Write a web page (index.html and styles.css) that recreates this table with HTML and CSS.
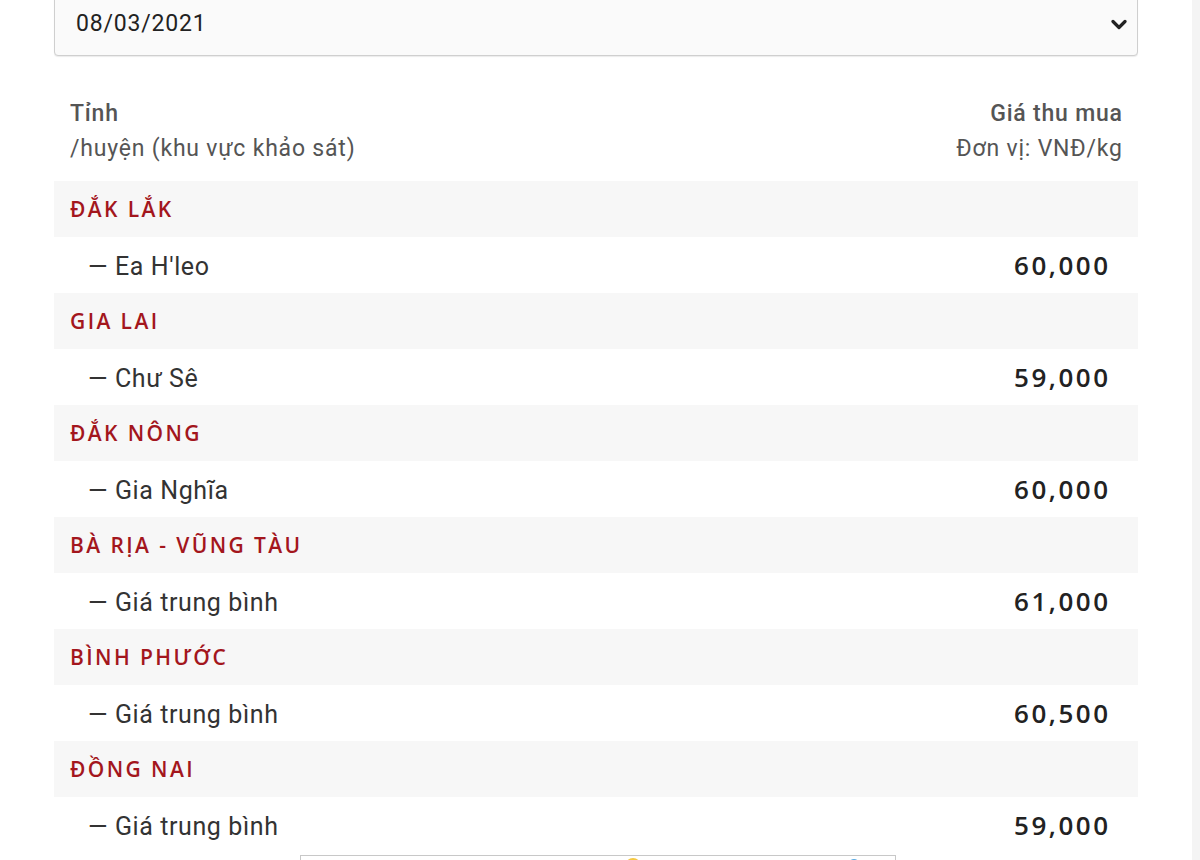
FILE: index.html
```html
<!DOCTYPE html>
<html lang="vi">
<head>
<meta charset="utf-8">
<title>Giá thu mua</title>
<link rel="stylesheet" href="styles.css">
</head>
<body>
<div class="page">
  <main class="content">
    <div class="select">
      <span class="select-value">08/03/2021</span>
      <svg class="chevron" width="16" height="11" viewBox="0 0 16 11"><path d="M2 2.5 L8 8.5 L14 2.5" fill="none" stroke="#222" stroke-width="3.2" stroke-linecap="round" stroke-linejoin="round"/></svg>
    </div>
    <div class="table-head">
      <div class="head-left">
        <div class="head-title">Tỉnh</div>
        <div class="head-sub">/huyện (khu vực khảo sát)</div>
      </div>
      <div class="head-right">
        <div class="head-title">Giá thu mua</div>
        <div class="head-sub">Đơn vị: VNĐ/kg</div>
      </div>
    </div>
    <div class="rows">
      <div class="prov">ĐẮK LẮK</div>
      <div class="item"><span class="name">— Ea H'leo</span><span class="price">60,000</span></div>
      <div class="prov">GIA LAI</div>
      <div class="item"><span class="name">— Chư Sê</span><span class="price">59,000</span></div>
      <div class="prov">ĐẮK NÔNG</div>
      <div class="item"><span class="name">— Gia Nghĩa</span><span class="price">60,000</span></div>
      <div class="prov">BÀ RỊA - VŨNG TÀU</div>
      <div class="item"><span class="name">— Giá trung bình</span><span class="price">61,000</span></div>
      <div class="prov">BÌNH PHƯỚC</div>
      <div class="item"><span class="name">— Giá trung bình</span><span class="price">60,500</span></div>
      <div class="prov">ĐỒNG NAI</div>
      <div class="item"><span class="name">— Giá trung bình</span><span class="price">59,000</span></div>
    </div>
    <div class="banner">
      <svg width="598" height="10" viewBox="0 0 598 10"><circle cx="332" cy="10" r="8" fill="#f5c842"/><circle cx="553" cy="9" r="6" fill="#5aa9e0"/></svg>
    </div>
  </main>
  <div class="scroll"></div>
</div>
</body>
</html>
```

FILE: styles.css
```css
html, body {
  margin: 0;
  padding: 0;
  background: #fff;
  overflow: hidden;
}
body {
  font-family: Roboto, "Noto Sans", Arial, sans-serif;
  color: #333;
}
.page {
  display: flex;
  width: 1200px;
  height: 860px;
  overflow: hidden;
}
.content {
  width: 1084px;
  margin-left: 54px;
  flex: none;
}
.scroll {
  margin-left: auto;
  width: 8px;
  background: #f4f4f4;
}
.select {
  margin-top: -10px;
  height: 66px;
  box-sizing: border-box;
  border: 1px solid #cfcfcf;
  border-radius: 4px;
  background: #fafafa;
  box-shadow: 0 1px 1px rgba(0,0,0,0.08);
  display: flex;
  align-items: center;
  justify-content: space-between;
  padding: 0 10px 0 21px;
}
.select-value {
  font-size: 23px;
  letter-spacing: 0.8px;
  color: #222;
  padding-top: 1px;
}
.chevron {
  margin-top: 2px;
}
.table-head {
  display: flex;
  justify-content: space-between;
  padding: 40px 16px 0 16px;
  height: 85px;
  font-size: 23px;
  letter-spacing: 0.8px;
  line-height: 35px;
  color: #555;
}
.head-right {
  text-align: right;
  margin-right: -0.8px;
}
.head-title {
  font-weight: 500;
}
.rows {
  display: flex;
  flex-direction: column;
}
.prov {
  height: 56px;
  background: #f7f7f7;
  display: flex;
  align-items: center;
  padding-left: 16px;
  font-family: "Open Sans", "Noto Sans", sans-serif;
  font-weight: 600;
  font-size: 21px;
  letter-spacing: 2.4px;
  color: #a3161d;
}
.item {
  height: 56px;
  display: flex;
  align-items: center;
  justify-content: space-between;
  padding: 0 30px 0 34px;
}
.name {
  font-size: 25px;
  letter-spacing: 0.6px;
  color: #333;
  padding-top: 3px;
}
.price {
  font-family: "Open Sans", "Noto Sans", sans-serif;
  font-weight: 600;
  font-size: 26px;
  letter-spacing: 2.5px;
  margin-right: -2.5px;
  color: #222;
}
.banner {
  margin: 2px 0 0 246px;
  width: 596px;
  height: 20px;
  box-sizing: border-box;
  border: 1px solid #c8c8c8;
  overflow: hidden;
}
.banner svg {
  display: block;
}
```
